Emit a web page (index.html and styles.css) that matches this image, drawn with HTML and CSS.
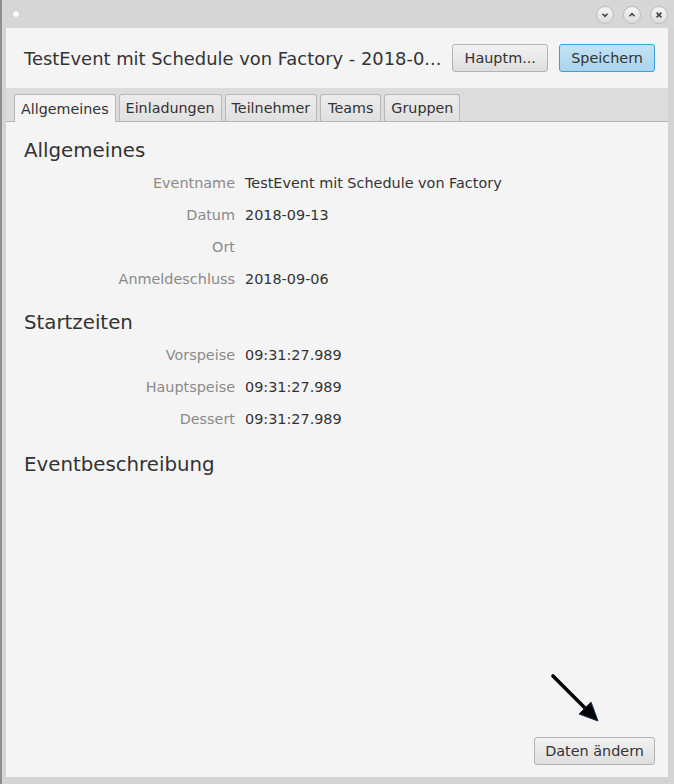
FILE: index.html
```html
<!DOCTYPE html>
<html>
<head>
<meta charset="utf-8">
<link rel="stylesheet" href="styles.css">
</head>
<body>
<div class="window">
  <div class="titlebar">
    <span class="dot"></span>
    <div class="controls">
      <span class="ctl"><svg width="10" height="10" viewBox="0 0 10 10"><path d="M2.5 3.8 L5 6.3 L7.5 3.8" fill="none" stroke="#444" stroke-width="1.6"/></svg></span>
      <span class="ctl"><svg width="10" height="10" viewBox="0 0 10 10"><path d="M2.5 6.2 L5 3.7 L7.5 6.2" fill="none" stroke="#444" stroke-width="1.6"/></svg></span>
      <span class="ctl"><svg width="10" height="10" viewBox="0 0 10 10"><path d="M2.6 2.6 L7.4 7.4 M7.4 2.6 L2.6 7.4" fill="none" stroke="#444" stroke-width="1.6"/></svg></span>
    </div>
  </div>
  <div class="frame">
    <div class="header">
      <div class="title">TestEvent mit Schedule von Factory - 2018-0...</div>
      <button class="btn">Hauptm...</button>
      <button class="btn btn-default">Speichern</button>
    </div>
    <div class="tabbar">
      <div class="tab active">Allgemeines</div>
      <div class="tab">Einladungen</div>
      <div class="tab">Teilnehmer</div>
      <div class="tab tab-teams">Teams</div>
      <div class="tab">Gruppen</div>
    </div>
    <div class="content">
      <h2 class="section first">Allgemeines</h2>
      <div class="grid">
        <div class="label">Eventname</div><div class="value">TestEvent mit Schedule von Factory</div>
        <div class="label">Datum</div><div class="value">2018-09-13</div>
        <div class="label">Ort</div><div class="value"></div>
        <div class="label">Anmeldeschluss</div><div class="value">2018-09-06</div>
      </div>
      <h2 class="section">Startzeiten</h2>
      <div class="grid">
        <div class="label">Vorspeise</div><div class="value">09:31:27.989</div>
        <div class="label">Hauptspeise</div><div class="value">09:31:27.989</div>
        <div class="label">Dessert</div><div class="value">09:31:27.989</div>
      </div>
      <h2 class="section desc">Eventbeschreibung</h2>
      <div class="spacer"></div>
      <div class="footer">
        <svg class="arrow" width="60" height="60" viewBox="0 0 60 60"><path d="M5 5 L38 38" stroke="#000" stroke-width="3.6" stroke-linecap="round"/><path d="M31 43 L50 50 L43 31 Z" fill="#000" stroke="#1a2a5a" stroke-width="1"/></svg>
        <button class="btn">Daten ändern</button>
      </div>
    </div>
  </div>
</div>
</body>
</html>
```

FILE: styles.css
```css
html, body {
  margin: 0;
  padding: 0;
  width: 674px;
  height: 784px;
  overflow: hidden;
  font-family: "DejaVu Sans", sans-serif;
}
.window {
  width: 674px;
  height: 784px;
  box-sizing: border-box;
  background: #d4d4d4;
  border-left: 2px solid #8e8e8e;
  display: flex;
  flex-direction: column;
}
.titlebar {
  height: 28px;
  flex: none;
  display: flex;
  align-items: center;
  padding: 0 6px 0 11px;
  background: #d6d6d6;
}
.dot {
  width: 6px;
  height: 6px;
  border-radius: 50%;
  background: #fafafa;
  box-shadow: 0 0 1px #aaa;
}
.controls {
  margin-left: auto;
  display: flex;
  gap: 9px;
  padding-top: 1px;
}
.ctl {
  width: 18px;
  height: 18px;
  box-sizing: border-box;
  border-radius: 50%;
  border: 1px solid #bdbdbd;
  background: linear-gradient(#f6f6f6, #dcdcdc);
  display: flex;
  align-items: center;
  justify-content: center;
}
.frame {
  flex: 1;
  margin: 0 6px 7px 4px;
  display: flex;
  flex-direction: column;
  background: #f4f4f4;
}
.header {
  height: 60px;
  flex: none;
  display: flex;
  align-items: center;
  padding: 0 13px 0 18px;
  gap: 11px;
}
.title {
  flex: 1;
  font-size: 17.9px;
  color: #333;
  white-space: nowrap;
  padding-top: 1px;
}
.btn {
  font-family: "DejaVu Sans", sans-serif;
  font-size: 14.4px;
  color: #333;
  height: 28px;
  padding: 0 10px;
  border: 1px solid #b3b3b3;
  border-radius: 3px;
  background: linear-gradient(#f2f2f2, #dedede);
}
.header .btn { width: 96px; padding: 0; }
.btn-default {
  border-color: #3c9fd6;
  background: linear-gradient(#c4e3f4, #a9d4ee);
}
.tabbar {
  height: 34px;
  flex: none;
  box-sizing: border-box;
  background: #dcdcdc;
  border-bottom: 1px solid #b5b5b5;
  display: flex;
  align-items: flex-end;
  padding-left: 8px;
  gap: 3px;
}
.tab {
  height: 27px;
  box-sizing: border-box;
  padding: 0 6px;
  display: flex;
  align-items: center;
  font-size: 14.3px;
  color: #333;
  border: 1px solid #b8b8b8;
  border-bottom: none;
  border-radius: 3px 3px 0 0;
  background: linear-gradient(#ececec, #e0e0e0);
}
.tab-teams { padding: 0 7px; }
.tab.active {
  background: #f4f4f4;
  height: 28px;
  margin-bottom: -1px;
}
.content {
  flex: 1;
  display: flex;
  flex-direction: column;
  padding: 13px 13px 12px 18px;
}
.section {
  margin: 6px 0 4px 0;
  font-size: 19.8px;
  font-weight: normal;
  color: #333;
  line-height: 24px;
}
.section.first {
  margin-top: 4px;
  margin-bottom: 4px;
}
.section.desc {
  margin-top: 8px;
}
.grid {
  display: grid;
  grid-template-columns: 211px 1fr;
  column-gap: 10px;
  grid-auto-rows: 32px;
  align-items: center;
  font-size: 14.4px;
  margin-bottom: 10px;
}
.label {
  text-align: right;
  color: #8a8a8a;
}
.value {
  color: #333;
}
.spacer { flex: 1; }
.footer {
  position: relative;
  display: flex;
  justify-content: flex-end;
}
.arrow {
  position: absolute;
  right: 47px;
  bottom: 34px;
}
```
